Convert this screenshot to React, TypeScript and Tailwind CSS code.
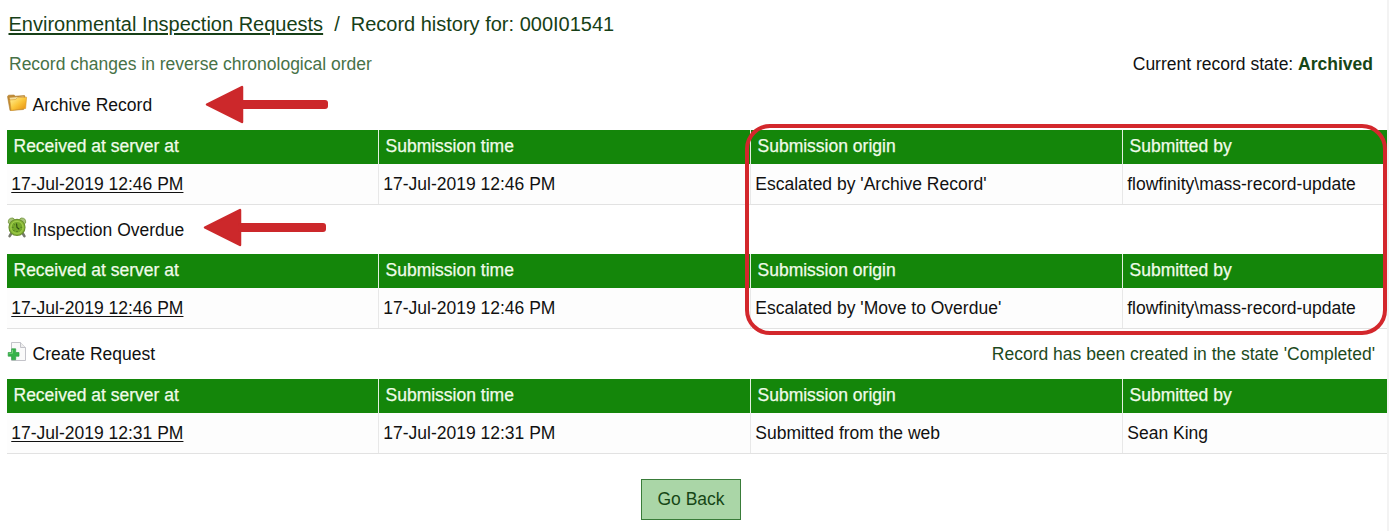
import type { ReactNode } from "react";

interface HistoryEntry {
  title: string;
  icon: ReactNode;
  note?: string;
  receivedAt: string;
  submittedAt: string;
  origin: string;
  submittedBy: string;
  headingClass: string;
}

const columns = ["Received at server at", "Submission time", "Submission origin", "Submitted by"];

function FolderIcon() {
  return (
    <svg width="22" height="20" viewBox="0 0 22 20">
      <defs>
        <linearGradient id="folder" x1="0" y1="0" x2="1" y2="1">
          <stop offset="0" stopColor="#fff3a0" />
          <stop offset="0.5" stopColor="#fbc63a" />
          <stop offset="1" stopColor="#e58a0c" />
        </linearGradient>
      </defs>
      <path d="M0.5 3.5L1.5 2.2L7 2L8.5 3.2L17.5 2.5L18 4L16.5 16.5L3 17.5Z" fill="#c08a35" stroke="#b07d2c" strokeWidth="0.6" />
      <path d="M2.5 4.8L16.7 3.5L17 7L4 9Z" fill="#f3dfa0" />
      <path d="M2.8 7L8.5 6.5L10.5 4.7L19.6 4.2L18.6 15.5L4.2 17.4Z" fill="url(#folder)" stroke="#d6972a" strokeWidth="0.6" />
    </svg>
  );
}

function ClockIcon() {
  return (
    <svg width="20" height="22" viewBox="0 0 20 22">
      <path d="M4.5 16L2.6 19.2M15.5 16L17.4 19.2" stroke="#75786c" strokeWidth="2.6" strokeLinecap="round" />
      <path d="M1.4 6Q0.6 0.8 6 1L8.2 3L3.3 7.5ZM18.6 6Q19.4 0.8 14 1L11.8 3L16.7 7.5Z" fill="#a9c47a" stroke="#71943c" strokeWidth="0.8" />
      <circle cx="10" cy="10.3" r="8" fill="#8ebf3a" stroke="#6c9130" strokeWidth="1.2" />
      <circle cx="10" cy="10.3" r="5.9" fill="#74a82a" stroke="#a8d153" strokeWidth="0.8" />
      <path d="M9.5 6.5L10 10.5L12.3 12.3" fill="none" stroke="#2c4a12" strokeWidth="1.1" />
      <path d="M10 15V14M5.4 10.3H6.4M13.6 10.3H14.6M6.8 7L7.5 7.7M6.8 13.6L7.5 12.9" stroke="#35571a" strokeWidth="0.9" />
    </svg>
  );
}

function NewPageIcon() {
  return (
    <svg width="20" height="22" viewBox="0 0 20 22">
      <path d="M4.5 1.5H13.5L18.5 6.5V19.5H4.5Z" fill="#fafafa" stroke="#c3c3c9" />
      <path d="M13.5 1.5V6.5H18.5" fill="#eeeeee" stroke="#c3c3c9" />
      <path d="M4.7 7.8H8.7V11.5H12V15.2H8.7V18.7H4.7V15.2H1.2V11.5H4.7Z" fill="#37b34a" stroke="#2f9d45" strokeWidth="0.7" />
      <path d="M5.5 8.8V12.3H2.2" fill="none" stroke="#79d47d" />
    </svg>
  );
}

function Arrow() {
  return (
    <svg width="126" height="40" viewBox="0 0 126 40">
      <path d="M3 19.5L38 2V37Z" fill="#cc282b" stroke="#cc282b" strokeWidth="2.5" strokeLinejoin="round" />
      <rect x="36" y="15" width="88" height="9" rx="3" fill="#cc282b" />
    </svg>
  );
}

const entries: HistoryEntry[] = [
  {
    title: "Archive Record",
    icon: <FolderIcon />,
    receivedAt: "17-Jul-2019 12:46 PM",
    submittedAt: "17-Jul-2019 12:46 PM",
    origin: "Escalated by 'Archive Record'",
    submittedBy: "flowfinity\\mass-record-update",
    headingClass: "h-[50px]",
  },
  {
    title: "Inspection Overdue",
    icon: <ClockIcon />,
    receivedAt: "17-Jul-2019 12:46 PM",
    submittedAt: "17-Jul-2019 12:46 PM",
    origin: "Escalated by 'Move to Overdue'",
    submittedBy: "flowfinity\\mass-record-update",
    headingClass: "h-[49px] pt-px",
  },
  {
    title: "Create Request",
    icon: <NewPageIcon />,
    note: "Record has been created in the state 'Completed'",
    receivedAt: "17-Jul-2019 12:31 PM",
    submittedAt: "17-Jul-2019 12:31 PM",
    origin: "Submitted from the web",
    submittedBy: "Sean King",
    headingClass: "h-[50px]",
  },
];

function HistorySection({ entry }: { entry: HistoryEntry }) {
  return (
    <section>
      <div className={`${entry.headingClass} flex items-center justify-between pr-3`}>
        <h2 className="flex items-center">
          <span className="w-[25.5px] shrink-0 pb-1">{entry.icon}</span>
          {entry.title}
        </h2>
        {entry.note && <span className="text-[#1d4a1d]">{entry.note}</span>}
      </div>
      <div className="grid h-[34px] grid-cols-[372px_372px_372px_264px] bg-[#14860a] leading-8 text-[#f0fbe9]">
        {columns.map((column) => (
          <div key={column} className="border-r border-[#e3f0e1] pl-[6.5px] [-webkit-text-stroke:0.25px] last:border-r-0">
            {column}
          </div>
        ))}
      </div>
      <div className="grid h-[41px] grid-cols-[372px_372px_372px_264px] border-b border-[#e2e2e2] bg-[#fdfdfd] leading-10 *:border-r *:border-[#e8e8e8] *:pl-[4.25px] *:last:border-r-0">
        <div>
          <a href="#" className="underline decoration-1 underline-offset-2">{entry.receivedAt}</a>
        </div>
        <div>{entry.submittedAt}</div>
        <div>{entry.origin}</div>
        <div>{entry.submittedBy}</div>
      </div>
    </section>
  );
}

export default function App() {
  return (
    <main className="relative h-[531px] w-[1389px] overflow-hidden border-r-2 border-[#f3f3f3] bg-white pl-[7px] font-['Liberation_Sans',Arial,sans-serif] text-[17.5px] text-[#111111]">
      <h1 className="flex h-12 items-center gap-[11px] pl-[1.5px] text-xl text-[#173f17]">
        <a href="#" className="underline decoration-2 underline-offset-2">Environmental Inspection Requests</a>
        <span>/</span>
        <span>Record history for: 000I01541</span>
      </h1>
      <div className="flex h-8 items-center justify-between pr-3.5 pl-0.5">
        <span className="text-[#477247]">Record changes in reverse chronological order</span>
        <span>
          Current record state: <b className="text-[#164616]">Archived</b>
        </span>
      </div>

      {entries.map((entry) => (
        <HistorySection key={entry.title} entry={entry} />
      ))}

      <div className="flex justify-center pt-[25px] pr-[13px]">
        <button className="h-[41px] w-[100px] border border-[#397c39] bg-[#aad6a7] pl-px text-[17.5px] text-[#164616]">Go Back</button>
      </div>

      {/* callouts */}
      <div className="absolute top-[85px] left-[204px]">
        <Arrow />
      </div>
      <div className="absolute top-[208px] left-[202px]">
        <Arrow />
      </div>
      <div className="absolute top-[124px] left-[745px] h-[211px] w-[642px] rounded-[25px] border-4 border-[#d3272c]" />
    </main>
  );
}
